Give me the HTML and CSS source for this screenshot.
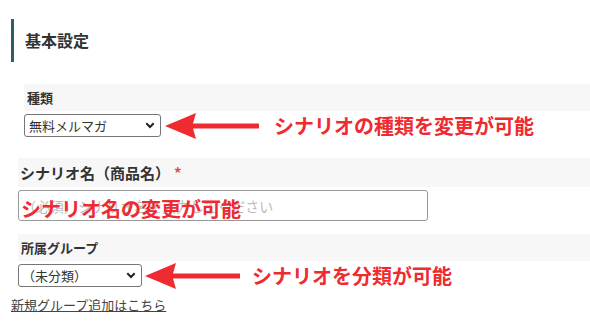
FILE: index.html
```html
<!DOCTYPE html>
<html lang="ja">
<head>
<meta charset="utf-8">
<title>基本設定</title>
<link rel="stylesheet" href="styles.css">
</head>
<body>
<div class="page">
  <h2 class="title">基本設定</h2>

  <div class="field f1">
    <div class="band">種類</div>
    <div class="row">
      <div class="select s1">
        <span>無料メルマガ</span>
        <svg class="chev" width="10" height="7" viewBox="0 0 10 7"><path d="M1.3 1.3 L5 5 L8.7 1.3" fill="none" stroke="#222" stroke-width="2"/></svg>
      </div>
      <svg class="arrow a1" width="94" height="26" viewBox="0 0 94 26"><polygon points="0,13 31,0 28,10.5 94,10.5 94,15.5 28,15.5 31,26" fill="#ee2b30"/></svg>
      <span class="note n1">シナリオの種類を変更が可能</span>
    </div>
  </div>

  <div class="field f2">
    <div class="band band-lg">シナリオ名（商品名）<span class="req">*</span></div>
    <div class="input-wrap">
      <input class="text-input" type="text" placeholder="（必須）シナリオ名を入力してください">
      <span class="overlay-note">シナリオ名の変更が可能</span>
    </div>
  </div>

  <div class="field f3">
    <div class="band">所属グループ</div>
    <div class="row">
      <div class="select s3">
        <span>（未分類）</span>
        <svg class="chev" width="10" height="7" viewBox="0 0 10 7"><path d="M1.3 1.3 L5 5 L8.7 1.3" fill="none" stroke="#222" stroke-width="2"/></svg>
      </div>
      <svg class="arrow a3" width="95" height="26" viewBox="0 0 95 26"><polygon points="0,13 31,0 28,10.5 95,10.5 95,15.5 28,15.5 31,26" fill="#ee2b30"/></svg>
      <span class="note n3">シナリオを分類が可能</span>
    </div>
  </div>

  <a class="link" href="#">新規グループ追加はこちら</a>
</div>
</body>
</html>
```

FILE: styles.css
```css
body {
  margin: 0;
  background: #fff;
  color: #333;
  font-family: "Noto Sans CJK JP", "Noto Sans", sans-serif;
}

.page {
  display: flex;
  flex-direction: column;
  align-items: flex-start;
}

.title {
  box-sizing: border-box;
  margin: 19px 0 0 11px;
  height: 43px;
  line-height: 43px;
  border-left: 3px solid #2e5e6a;
  padding-left: 11px;
  font-size: 16px;
  font-weight: bold;
  color: #333;
}

.field {
  align-self: stretch;
}

.f1 {
  margin: 22px 0 0 24px;
}

.f2 {
  margin: 21px 0 0 18px;
}

.f3 {
  margin: 13px 0 0 18px;
}

.band {
  background: #f7f7f7;
  height: 27px;
  line-height: 27px;
  padding-left: 3px;
  font-size: 13px;
  font-weight: bold;
  color: #333;
}

.band-lg {
  height: 29px;
  line-height: 29px;
  padding-left: 2px;
  font-size: 15px;
}

.req {
  color: #d9534f;
  margin-left: 4px;
}

.row {
  display: flex;
  align-items: center;
  height: 23px;
  margin-top: 3px;
}

.select {
  box-sizing: border-box;
  height: 23px;
  border: 1px solid #767676;
  border-radius: 3px;
  display: flex;
  align-items: center;
  justify-content: space-between;
  padding: 0 5px 0 4px;
  font-size: 13px;
  color: #333;
  background: #fff;
}

.s1 {
  width: 137px;
}

.s3 {
  width: 124px;
  padding-left: 3px;
}

.chev {
  display: block;
}

.arrow {
  display: block;
  flex: none;
}

.a1 {
  margin-left: 4px;
}

.a3 {
  margin-left: 3px;
}

.note {
  color: #ee2b30;
  font-size: 20px;
  font-weight: bold;
  line-height: 26px;
  white-space: nowrap;
}

.n1 {
  margin-left: 15px;
}

.n3 {
  margin-left: 12px;
}

.input-wrap {
  position: relative;
  margin-top: 3px;
  width: 410px;
}

.text-input {
  box-sizing: border-box;
  display: block;
  width: 410px;
  height: 31px;
  border: 1px solid #999;
  border-radius: 3px;
  padding: 0 3px;
  font-family: "Noto Sans CJK JP", "Noto Sans", sans-serif;
  font-size: 14px;
  color: #333;
  background: #fff;
}

.text-input::placeholder {
  color: #bbb;
}

.overlay-note {
  position: absolute;
  left: 3px;
  top: 7px;
  color: #ee2b30;
  font-size: 20px;
  font-weight: bold;
  line-height: 24px;
  white-space: nowrap;
}

.link {
  margin: 9px 0 0 11px;
  font-size: 13px;
  line-height: 18px;
  color: #444;
  text-decoration: underline;
}
```
